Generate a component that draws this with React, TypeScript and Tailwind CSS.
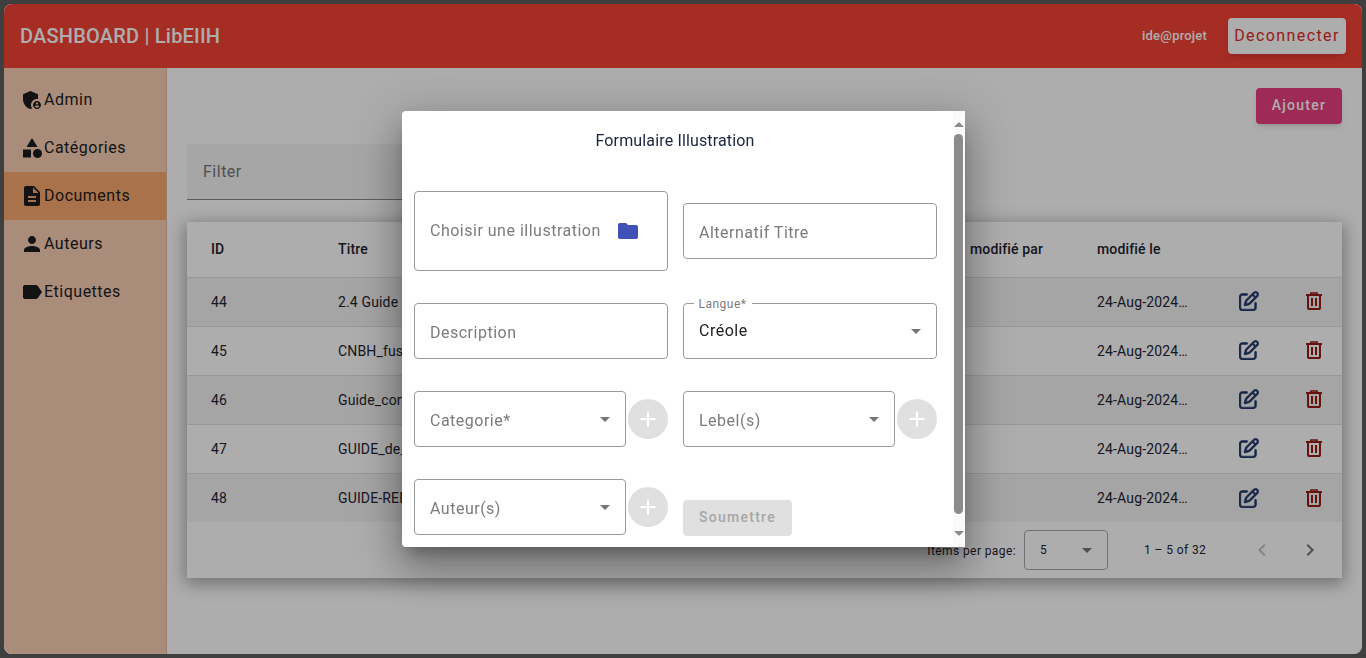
import React from "react";
import { MdAdminPanelSettings, MdCategory, MdDescription, MdPerson, MdLabel, MdFolder, MdArrowDropDown, MdAdd, MdChevronLeft, MdChevronRight } from "react-icons/md";
import { FaRegPenToSquare } from "react-icons/fa6";

const nav = [
  { label: "Admin", Icon: MdAdminPanelSettings },
  { label: "Catégories", Icon: MdCategory },
  { label: "Documents", Icon: MdDescription, active: true },
  { label: "Auteurs", Icon: MdPerson },
  { label: "Etiquettes", Icon: MdLabel },
];

const rows = [
  ["44", "2.4 Guide"],
  ["45", "CNBH_fus"],
  ["46", "Guide_con"],
  ["47", "GUIDE_de_"],
  ["48", "GUIDE-REF"],
];

function Trash() {
  return (
    <svg width="16" height="18" viewBox="0 0 16 18" fill="none" stroke="#971b15" strokeWidth="2">
      <path d="M0 3H16" />
      <path d="M5 2.5V1H11V2.5" strokeWidth="1.6" />
      <path d="M2 3V15.4A1.6 1.6 0 0 0 3.6 17H12.4A1.6 1.6 0 0 0 14 15.4V3" />
      <path d="M6 6V14M10 6V14" />
    </svg>
  );
}

function Field({ label, select, className = "" }: { label: string; select?: boolean; className?: string }) {
  return (
    <div className={`flex h-14 items-center justify-between rounded border border-[#9a9a9a] pl-[15.5px] pr-[8px] ${className}`}>
      <span className="pt-1 text-base tracking-[0.5px] text-[#7b7b7b]">{label}</span>
      {select && <MdArrowDropDown className="text-[#757575]" size={24} />}
    </div>
  );
}

function SelectAdd({ label }: { label: string }) {
  return (
    <div className="flex items-center justify-between">
      <Field label={label} select className="w-[212px]" />
      <div className="flex h-10 w-10 items-center justify-center rounded-full bg-[#e0e0e0] text-white">
        <MdAdd size={26} />
      </div>
    </div>
  );
}

export default function App() {
  return (
    <div className="h-[658px] w-[1366px] overflow-hidden bg-[#3f3f3f] p-1 font-['Roboto',sans-serif]">
      <div className="relative flex h-full flex-col overflow-hidden rounded-lg bg-white">
        <header className="flex h-16 shrink-0 items-center justify-between bg-[#f44336] pl-4 pr-4">
          <span className="text-xl font-medium tracking-[0.2px] text-white">DASHBOARD | LibEIIH</span>
          <div className="flex items-center gap-[21px]">
            <span className="text-[13px] font-medium tracking-[0.2px] text-white">ide@projet</span>
            <button className="h-9 w-[118px] rounded bg-white text-base tracking-[1.4px] text-[#e02a26] shadow-md">Deconnecter</button>
          </div>
        </header>
        <div className="flex min-h-0 flex-1">
          <aside className="w-[163px] shrink-0 border-r border-[#e0b89e] bg-[#facfb4] pt-2 text-[#1c1c1c]">
            {nav.map(({ label, Icon, active }) => (
              <div key={label} className={`flex h-12 items-center pl-4 ${active ? "bg-[#fba96f]" : ""}`}>
                <Icon size={24} className="shrink-0" />
                <span className="text-base tracking-[0.5px]">{label}</span>
              </div>
            ))}
          </aside>
          <main className="min-w-0 flex-1 px-5">
            <div className="flex justify-end pt-5">
              <button className="h-9 w-[86px] rounded bg-[#e93f80] pb-[2px] text-sm font-medium tracking-[1.25px] text-white shadow-md">Ajouter</button>
            </div>
            <div className="mt-5 flex h-14 w-[640px] items-center border-b border-[#8a8a8a] bg-[#f5f5f5] px-4 text-base tracking-[0.5px] text-[#757575]">Filter</div>
            <div className="mt-[22px] bg-white text-sm tracking-[0.15px] text-[#1f2430] shadow-[0_4px_16px_2px_rgba(0,0,0,0.35)]">
              <div className="grid h-14 grid-cols-[127px_632px_127px_1fr] items-center border-b border-[#e0e0e0] pb-[2px] pl-6 font-medium">
                <span>ID</span>
                <span>Titre</span>
                <span>modifié par</span>
                <span>modifié le</span>
              </div>
              {rows.map(([id, title], i) => (
                <div key={id} className={`grid grid-cols-[127px_632px_127px_1fr] items-center pl-6 ${i < 4 ? "h-[49px] border-b border-[#e0e0e0] pb-[1px]" : "h-12"} ${i % 2 === 0 ? "bg-[#f3f3f3]" : ""}`}>
                  <span>{id}</span>
                  <span>{title}</span>
                  <span />
                  <div className="flex items-center">
                    <span className="w-[142px]">24-Aug-2024…</span>
                    <div className="mb-[1px] flex items-center">
                      <FaRegPenToSquare size={20} stroke="currentColor" strokeWidth={14} className="text-[#22386a]" />
                      <span className="ml-[47px] flex"><Trash /></span>
                    </div>
                  </div>
                </div>
              ))}
              <div className="flex h-14 items-center justify-end text-xs tracking-[0.4px] text-[#1f2430]">
                <span className="mt-[2px]">Items per page:</span>
                <div className="ml-2 flex h-10 w-[84px] items-center justify-between rounded border border-[#a8a8a8] pl-[15px] pr-[8px]">
                  <span>5</span>
                  <MdArrowDropDown className="text-[#757575]" size={24} />
                </div>
                <span className="mb-[1px] ml-9 w-[62px] whitespace-nowrap">1 – 5 of 32</span>
                <MdChevronLeft size={24} className="ml-[44px] text-[#c4c4c4]" />
                <MdChevronRight size={24} className="ml-6 mr-5 text-[#757575]" />
              </div>
            </div>
          </main>
        </div>
        <div className="absolute inset-0 bg-black/32" />
      </div>
      <div className="fixed inset-0 flex items-center justify-center">
        <div className="relative h-[436px] w-[563px] overflow-hidden rounded-l bg-white shadow-[0_11px_15px_-7px_rgba(0,0,0,0.3),0_24px_38px_3px_rgba(0,0,0,0.2),0_9px_46px_8px_rgba(0,0,0,0.17)]">
          <div className="w-[551px] pl-3 pr-[16px] pt-[18px]">
            <h2 className="text-center text-base leading-[24px] tracking-[0.15px] text-[#1a2440]">Formulaire Illustration</h2>
            <div className="mt-[38px] grid grid-cols-2 items-center gap-x-[15px] gap-y-8">
              <div className="flex h-20 items-center rounded border border-[#9a9a9a] pl-[15.5px]">
                <span className="text-base tracking-[0.5px] text-[#7b7b7b]">Choisir une illustration</span>
                <MdFolder size={24} className="ml-[15px] text-[#3f51b5]" />
              </div>
              <Field label="Alternatif Titre" />
              <Field label="Description" />
              <div className="relative flex h-14 items-center justify-between rounded border border-[#9a9a9a] pl-[15.5px] pr-[8px]">
                <span className="absolute -top-[7px] left-[10px] bg-white px-[5px] text-xs leading-[14px] tracking-[0.5px] text-[#7b7b7b]">Langue*</span>
                <span className="text-base tracking-[0.5px] text-[#212121]">Créole</span>
                <MdArrowDropDown className="text-[#757575]" size={24} />
              </div>
              <SelectAdd label="Categorie*" />
              <SelectAdd label="Lebel(s)" />
              <SelectAdd label="Auteur(s)" />
              <div className="-mb-px self-end">
                <button className="block h-9 w-[109px] rounded bg-[#e0e0e0] pb-[2px] pl-[1px] text-sm font-medium tracking-[1.25px] text-[#a6a6a6]">Soumettre</button>
              </div>
            </div>
          </div>
          <div className="absolute inset-y-0 right-0 w-3 bg-[#fafafa]">
            <div className="absolute left-[1px] top-[11px] h-0 w-0 border-x-[5px] border-b-[5px] border-x-transparent border-b-[#8c8c8c]" />
            <div className="absolute left-[1px] top-[23px] h-[380px] w-[9px] rounded-full bg-[#8c8c8c]" />
            <div className="absolute bottom-[11px] left-[1px] h-0 w-0 border-x-[5px] border-t-[5px] border-x-transparent border-t-[#8c8c8c]" />
          </div>
        </div>
      </div>
    </div>
  );
}
